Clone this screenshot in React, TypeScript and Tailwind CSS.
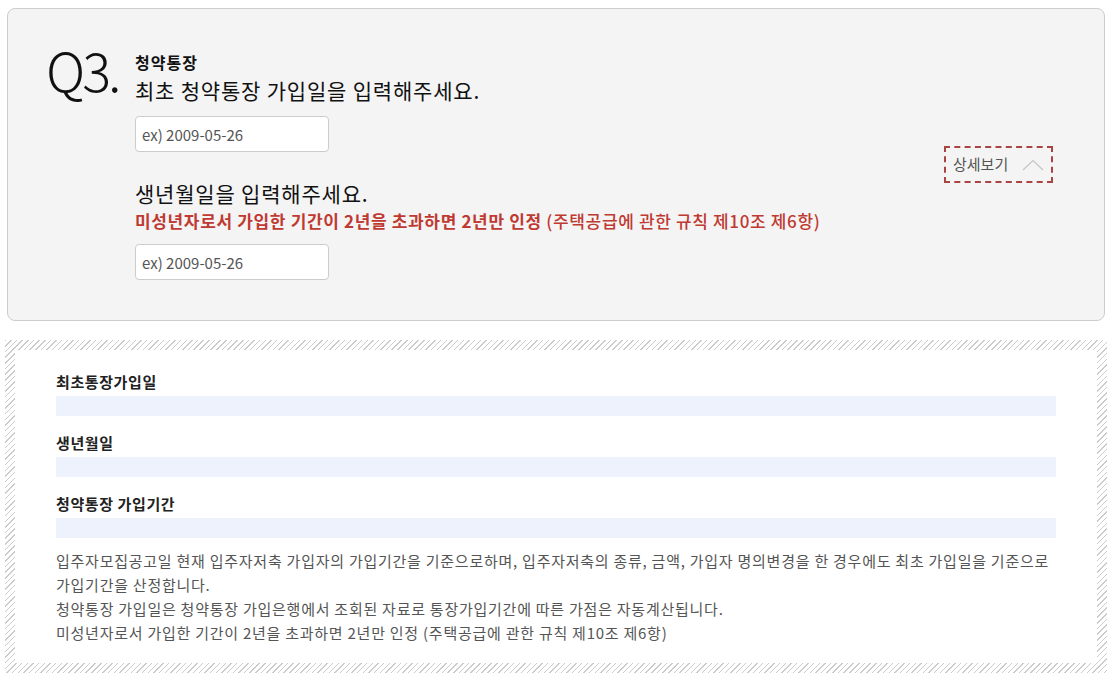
import React from "react";

function DateInput() {
  return (
    <input
      type="text"
      placeholder="ex) 2009-05-26"
      className="h-[36px] w-[194px] rounded-[4px] border border-[#cccccc] bg-white px-[6px] text-[15px] text-[#444] outline-none placeholder:text-[#555]"
    />
  );
}

function ResultRow({ label }: { label: string }) {
  return (
    <div>
      <div className="text-[15px] font-bold leading-[22px] tracking-[0.6px] text-[#222]">{label}</div>
      <div className="mt-[3px] h-[20px] bg-[#edf2fd]" />
    </div>
  );
}

export default function App() {
  return (
    <div className="min-h-[681px] bg-white font-['Noto_Sans_CJK_KR','Noto_Sans',sans-serif] text-[#111]">
      <div className="pl-[7px] pt-[8px]">
        <section className="flex h-[313px] w-[1098px] items-center rounded-[8px] border border-[#cdcdcd] bg-[#f4f4f4] pl-[38px] pr-[51px]">
          <div className="flex self-start pt-[32px]">
            <div className="-mt-[4px] w-[89px] text-[54px] font-light leading-[64px] tracking-[-3px] text-[#111]">
              Q3.
            </div>
            <div className="pt-[10px]">
              <div className="text-[16px] font-bold leading-[22px] tracking-[1px]">청약통장</div>
              <div className="mt-[3px] text-[21px] leading-[28px] tracking-[0.8px]">
                최초 청약통장 가입일을 입력해주세요.
              </div>
              <div className="mt-[12px]">
                <DateInput />
              </div>
              <div className="mt-[27px] text-[21px] leading-[28px] tracking-[0.8px]">생년월일을 입력해주세요.</div>
              <div className="mt-[1px] text-[17px] font-bold leading-[25px] tracking-[0.65px] text-[#bf3a32]">
                미성년자로서 가입한 기간이 2년을 초과하면 2년만 인정{" "}
                <span className="font-medium">(주택공급에 관한 규칙 제10조 제6항)</span>
              </div>
              <div className="mt-[11px]">
                <DateInput />
              </div>
            </div>
          </div>
          <button
            type="button"
            className="ml-auto flex h-[37px] w-[109px] items-center gap-[14px] border-2 border-dashed border-[#a94444] pl-[7px] text-[15px] text-[#555]"
          >
            <span>상세보기</span>
            <svg width="22" height="12" viewBox="0 0 22 12" fill="none">
              <path d="M1 11 L11 1.5 L21 11" stroke="#c4c4c4" strokeWidth="1.2" />
            </svg>
          </button>
        </section>
      </div>

      <div className="pl-[5px] pt-[19px]">
        <section className="w-[1102px] bg-[repeating-linear-gradient(135deg,#cccccc_0px,#cccccc_1px,#ffffff_1px,#ffffff_4px)] p-[10px]">
          <div className="flex flex-col gap-[16px] bg-white px-[41px] pb-[18px] pt-[21px]">
            <ResultRow label="최초통장가입일" />
            <ResultRow label="생년월일" />
            <ResultRow label="청약통장 가입기간" />
            <div className="-mt-[5px] text-[15px] leading-[24px] tracking-[0.75px] text-[#555]">
              <p>
                입주자모집공고일 현재 입주자저축 가입자의 가입기간을 기준으로하며, 입주자저축의 종류, 금액, 가입자 명의변경을 한 경우에도 최초 가입일을 기준으로 가입기간을 산정합니다.
              </p>
              <p>청약통장 가입일은 청약통장 가입은행에서 조회된 자료로 통장가입기간에 따른 가점은 자동계산됩니다.</p>
              <p>미성년자로서 가입한 기간이 2년을 초과하면 2년만 인정 (주택공급에 관한 규칙 제10조 제6항)</p>
            </div>
          </div>
        </section>
      </div>
    </div>
  );
}
